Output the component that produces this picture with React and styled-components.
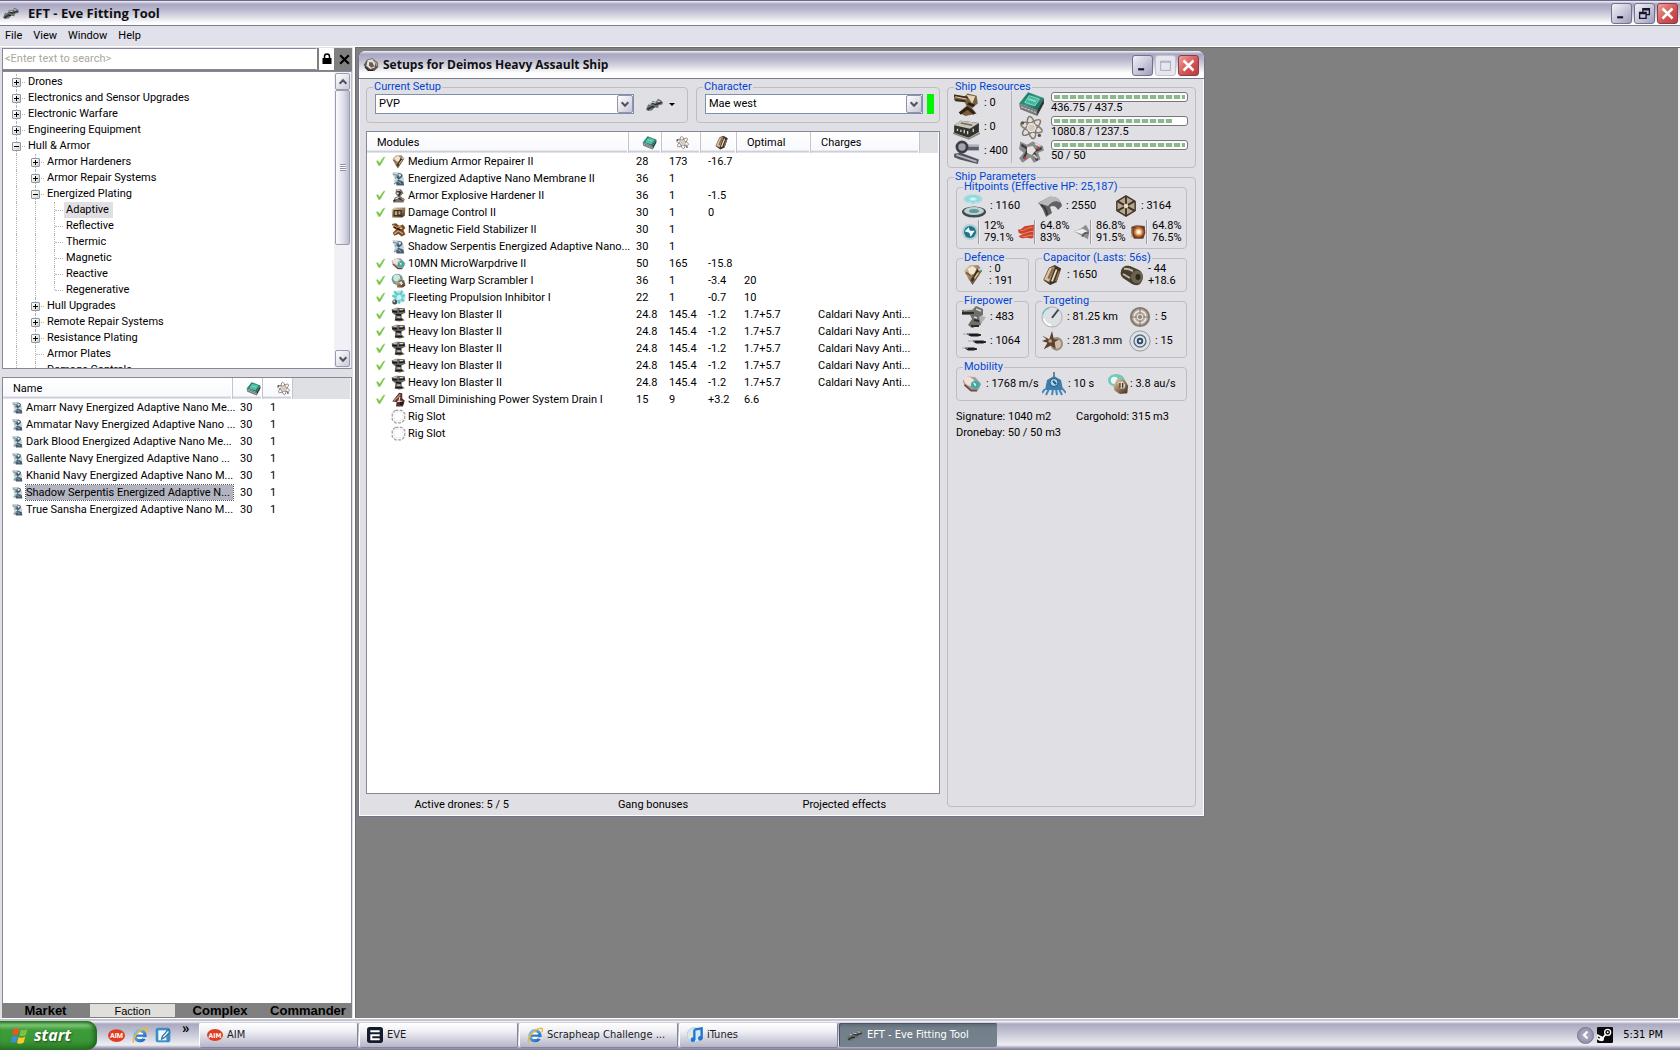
import React from 'react';
import styled, { createGlobalStyle, css } from 'styled-components';

const GlobalStyle = createGlobalStyle`
  *, *::before, *::after {
    box-sizing: border-box;
  }

  body {
    margin: 0;
    background: #808080;
  }

  body, button, input, select {
    font-family: Roboto, 'Liberation Sans', sans-serif;
    font-size: 11px;
    line-height: 12px;
    color: #000;
  }

  button {
    padding: 0;
    border: 0;
    background: none;
  }

  svg {
    display: block;
    flex: none;
  }

  h1, h2, ul {
    margin: 0;
    padding: 0;
    list-style: none;
  }
`;

/* ---------- icons ---------- */

const IconDefs = () => (
  <svg width="0" height="0" style={{ position: 'absolute' }} aria-hidden="true">
    <defs>
      <linearGradient id="steel" x1="0" y1="0" x2="1" y2="1">
        <stop offset="0" stopColor="#e4e4e6" />
        <stop offset="0.5" stopColor="#7d7d82" />
        <stop offset="1" stopColor="#2d2d32" />
      </linearGradient>
      <linearGradient id="brass" x1="0" y1="0" x2="1" y2="1">
        <stop offset="0" stopColor="#efe0c4" />
        <stop offset="0.5" stopColor="#957a58" />
        <stop offset="1" stopColor="#35271b" />
      </linearGradient>
      <linearGradient id="teal" x1="0" y1="0" x2="1" y2="1">
        <stop offset="0" stopColor="#12685f" />
        <stop offset="0.5" stopColor="#2f9a84" />
        <stop offset="1" stopColor="#14564f" />
      </linearGradient>
      <radialGradient id="cyan">
        <stop offset="0" stopColor="#f2ffff" />
        <stop offset="0.5" stopColor="#7fdcdf" />
        <stop offset="1" stopColor="#7fc9d0" stopOpacity="0.2" />
      </radialGradient>
      <linearGradient id="blue" x1="0" y1="0" x2="1" y2="1">
        <stop offset="0" stopColor="#8cc4ee" />
        <stop offset="1" stopColor="#1a64b5" />
      </linearGradient>
    </defs>
  </svg>
);

const glyphs = {
  gun: (
    <>
      <path d="M0 19l3-7 5-2 1-3 5 1 3-4 4 2 3 3-1 3-5 1-1 4-5-1-3 4-6 1z" fill="#6a7173" />
      <path d="M2 19l7-4 3 1M9 10l5 2 8-3" stroke="#26292a" strokeWidth="2" fill="none" />
      <path d="M9 9l5 1M16 7l4 1M4 12l3-1" stroke="#c9d1cd" strokeWidth="1.5" />
    </>
  ),
  ship: (
    <>
      <path d="M1 12l5-8 8-2 8 6 1 7-6 6-9 0z" fill="#5f5651" />
      <path d="M7 5l7-2 5 5-2 8-6 2-6-5z" fill="#e9e0d8" />
      <path d="M9 8l5 0 3 6-4 2-4-3z" fill="#6b5c53" />
      <path d="M15 5l5 4 1 5" stroke="#a39a93" strokeWidth="2" fill="none" />
      <path d="M3 15l5 5 7 0" stroke="#2a2523" strokeWidth="2" fill="none" />
    </>
  ),
  cpu: (
    <>
      <path d="M9 2l14 5-6 11L1 12z" fill="url(#teal)" />
      <path d="M10 5l9 3-4 6-9-3z" fill="#43b89d" stroke="#a5e6d4" strokeWidth="0.7" />
      <path d="M9 8l7 2" stroke="#8ee0cb" strokeWidth="1.5" />
      <path d="M1 12l16 6v5L2 17z" fill="#77797a" />
      <path d="M17 18l6-11v5l-6 11z" fill="#2b3634" />
      <path d="M3 15l13 5" stroke="#c9cdc9" strokeWidth="1" strokeDasharray="2 1" />
    </>
  ),
  grid: (
    <>
      <g fill="none" stroke="#857a70" strokeWidth="1.3">
        <ellipse cx="12" cy="12" rx="10" ry="3.500" transform="rotate(20 12 12)" />
        <ellipse cx="12" cy="12" rx="10" ry="3.500" transform="rotate(80 12 12)" />
        <ellipse cx="12" cy="12" rx="10" ry="3.500" transform="rotate(140 12 12)" />
      </g>
      <circle cx="12" cy="12" r="3.500" fill="#d3c8bb" stroke="#f5efe4" />
      <circle cx="4" cy="8" r="1.500" fill="#5d5148" />
      <circle cx="19" cy="19" r="1.500" fill="#5d5148" />
    </>
  ),
  cap: (
    <>
      <path d="M3 18L9 4l6-3 7 4-5 15-7 3z" fill="#3f3223" />
      <path d="M3 17L9 4l6-1-6 17z" fill="#d9c6a8" stroke="#7a6349" />
      <path d="M8 16l5-11" stroke="#8a6d4c" strokeWidth="2.5" />
      <path d="M12 19l5-13" stroke="#e8dac4" strokeWidth="2" />
      <path d="M16 19l4-11" stroke="#886d50" strokeWidth="2" />
    </>
  ),
  repairer: (
    <>
      <path d="M2 8l6-6 9 0 4 6-4 6-6 9-4-6z" fill="url(#brass)" />
      <path d="M6 6l5-3 4 3-2 5-5 2z" fill="#f2e6d3" />
      <path d="M10 19l7-12" stroke="#3e2d1e" strokeWidth="2.5" />
      <path d="M4 10l5 3" stroke="#8a5a2f" strokeWidth="2" />
      <path d="M13 16l4-6" stroke="#dcc6a4" strokeWidth="1.5" />
      <path d="M17 7l5-1" stroke="#b9e4e8" strokeWidth="2" />
    </>
  ),
  membrane: (
    <>
      <path d="M2 2h10l6 3 3 8-2 8H4l2-7z" fill="#c3d4d9" />
      <path d="M12 3c7 0 8 5 4 8l-4 3 8 3 1 6H9c-2-4 0-7 3-9L8 9z" fill="#465d70" />
      <path d="M3 5l7 2-3 5M5 21l6-5" stroke="#7d9ba8" strokeWidth="2" fill="none" />
      <path d="M12 5l4 1-2 3zM12 17l4 3" stroke="#e6f2f5" fill="#e6f2f5" />
    </>
  ),
  hardener: (
    <>
      <path d="M8 2h8l4 6-5 5 7 5-2 5H3l3-8 5-2-4-4z" fill="#78706a" />
      <path d="M10 4l5 3-3 6M4 21l7-5 8 4" stroke="#2d2520" strokeWidth="2" fill="none" />
      <path d="M9 3l5 1M7 18l5-3M9 8l3 1" stroke="#eee6dc" strokeWidth="2" />
      <circle cx="19" cy="18" r="2" fill="#b78355" />
    </>
  ),
  damage: (
    <>
      <path d="M1 7l4-3h18l-1 13-4 3H2z" fill="url(#brass)" />
      <path d="M4 8h13v10H4z" fill="#3b2d20" />
      <path d="M6 10h4v6H6zM12 10h3v5h-3z" fill="#c5a67d" />
    </>
  ),
  magstab: (
    <>
      <path d="M1 3l7-1 5 4 6-2 4 5-3 4 3 7-6 3-5-4-7 3-2-5 5-5z" fill="#75492a" />
      <path d="M3 5l6 4 8-3M5 19l7-5 7 5" stroke="#d99f61" strokeWidth="2" fill="none" />
      <path d="M9 10l6 3M4 8l4 2" stroke="#2c1a0e" strokeWidth="2.5" />
      <path d="M14 10l4 0" stroke="#f0d9b8" strokeWidth="2" />
    </>
  ),
  mwd: (
    <>
      <path d="M1 8l6-5 9 1 7 8-4 8-9 0-7-6z" fill="#a59c98" />
      <ellipse cx="9" cy="9" rx="7" ry="5" fill="#f1e2d9" transform="rotate(30 9 9)" />
      <ellipse cx="16" cy="13" rx="5.500" ry="5" fill="#47aaa2" />
      <path d="M13 10l4 2-1 3z" fill="#dcfffa" />
      <path d="M3 13l8 7 7 0" stroke="#74453a" strokeWidth="2" fill="none" />
    </>
  ),
  scrambler: (
    <>
      <circle cx="10" cy="10" r="9" fill="#6f9f98" />
      <circle cx="9" cy="8" r="5.500" fill="#c8e9e2" />
      <path d="M8 15l5-6 8 2 2 9-4 3H10z" fill="url(#brass)" />
      <path d="M12 14l5-2 3 5-3 3" stroke="#4b3c2d" strokeWidth="1.500" fill="#e9dfd0" />
    </>
  ),
  inhibitor: (
    <>
      <circle cx="13" cy="11" r="11" fill="url(#cyan)" />
      <path d="M5 2l7 7M2 9l9 3M18 1l-4 8M22 8l-8 4M21 18l-7-5M13 22l0-8" stroke="#5fc5cc" strokeWidth="3" />
      <circle cx="13" cy="12" r="4" fill="#c5f3f2" />
      <circle cx="6" cy="19" r="4" fill="#4c5253" />
      <circle cx="5" cy="18" r="1.500" fill="#d9dede" />
    </>
  ),
  blaster: (
    <>
      <path d="M1 4l8-3 13 1 1 7-6 3 0 5 5 4-8 2-8-1 1-9-5-4z" fill="#68635e" />
      <path d="M2 7l8 1M13 7l9-1M8 12l8 1M7 20l11 0" stroke="#1a1918" strokeWidth="2.5" />
      <path d="M4 4l6-1M14 4h5M10 16h5" stroke="#ddd6cc" strokeWidth="2" />
    </>
  ),
  nos: (
    <>
      <path d="M2 15L13 1l5 1v8l4 4-3 9H8l1-7z" fill="#54312c" />
      <path d="M5 14l10-10" stroke="#cf8d78" strokeWidth="2" />
      <path d="M10 15l8 0M14 8l-1 6" stroke="#eadbd1" strokeWidth="2" />
      <circle cx="17" cy="18" r="3" fill="#1f1817" />
    </>
  ),
  rig: (
    <>
      <path d="M7 2h10l5 5v10l-5 5H7l-5-5V7z" fill="#fff" stroke="#a2a2a2" strokeWidth="2" strokeDasharray="5 2" />
      <path d="M8 5h8l3 3v8l-3 3H8l-3-3V8z" fill="none" stroke="#d2d2d2" strokeDasharray="4 2" />
    </>
  ),
  turret: (
    <>
      <path d="M1 4l9 2 3-3 8 2 1 7-5 4 4 5-10 2-6-3 7-6-2-4-9-1z" fill="#77603f" />
      <path d="M1 5l12 2M2 9l9 1" stroke="#3c2c1c" strokeWidth="2" />
      <path d="M2 6l10 2M13 5l6 1-2 5z" stroke="#e6d3b6" fill="#e6d3b6" />
      <path d="M6 21l7-5 6 5M13 12l6 2" stroke="#2c2117" strokeWidth="2.5" fill="none" />
    </>
  ),
  launcher: (
    <>
      <path d="M1 10l6-4 16 2v8l-9 5-13-4z" fill="#33332f" />
      <path d="M1 10l6-4 16 2-8 5z" fill="#c9c6ba" />
      <path d="M7 8l10 2" stroke="#6d6a5f" strokeWidth="1.500" />
      <path d="M4 13v2M7 14v2M10 14v3M13 15v3M18 13v3" stroke="#d6d3c7" strokeWidth="1.200" />
      <path d="M0 17l14 5 10-5" stroke="#8e8b80" strokeWidth="1.500" fill="none" />
    </>
  ),
  calibration: (
    <>
      <path d="M11 6h12v5H11z" fill="#5d5f68" />
      <path d="M11 7h12" stroke="#b9bbc4" strokeWidth="1.500" />
      <circle cx="8" cy="8" r="4.500" fill="#a3a5ae" stroke="#3c3e46" strokeWidth="2.500" />
      <path d="M1 14l6-1 16 6-1 4-16-4-5-2z" fill="#53555e" />
      <path d="M3 15l18 6" stroke="#b4b6bf" strokeWidth="1.500" />
    </>
  ),
  drone: (
    <>
      <path d="M2 3l6 3 5-3 9 4 1 4-5 2 2 6-6 3-3-5-7 5-3-4 4-5-4-3z" fill="#8a898c" />
      <path d="M3 6l6 4-4 8M21 9l-7 3 3 8" stroke="#3c3b40" strokeWidth="2" fill="none" />
      <path d="M8 8l5-1 3 4-4 4-4-2z" fill="#e4e1de" />
      <path d="M15 5l5 2M14 15l3 3" stroke="#d9d7d7" strokeWidth="1.500" />
      <circle cx="6" cy="18" r="1.200" fill="#c23b32" />
      <circle cx="18" cy="9" r="1.200" fill="#c23b32" />
    </>
  ),
  shield: (
    <>
      <ellipse cx="11" cy="5" rx="10" ry="5" fill="url(#cyan)" />
      <path d="M8 7v9M14 7v9" stroke="#c5f1f2" strokeWidth="3" opacity="0.400" />
      <ellipse cx="12" cy="18" rx="12" ry="5.500" fill="#3d4c4f" />
      <ellipse cx="12" cy="17" rx="10" ry="4" fill="#c3d1d3" />
      <ellipse cx="12" cy="17" rx="5" ry="2" fill="#5b9ca0" />
    </>
  ),
  armor: (
    <>
      <path d="M0 9L11 3c8-1 12 3 13 9l-4 4c-2-4-5-5-8-3l2 6-6 4C6 18 4 12 0 9z" fill="#626264" />
      <path d="M0 9L11 3c7-1 11 2 12 6-5-3-9-2-13 3z" fill="#b9b9bb" />
      <path d="M3 11c4 2 6 6 6 10" stroke="#3a3a3c" strokeWidth="2" fill="none" />
    </>
  ),
  hull: (
    <>
      <path d="M12 1l10 6v10l-10 6-10-6V7z" fill="#b5a78f" stroke="#3d3225" strokeWidth="1.500" />
      <path d="M12 2v20M3 7l18 10M21 7L3 17" stroke="#3d3225" strokeWidth="2" />
      <circle cx="12" cy="12" r="2.500" fill="#e8dcc6" />
    </>
  ),
  em: (
    <>
      <circle cx="12" cy="12" r="12" fill="#8fc6d0" opacity="0.600" />
      <circle cx="12" cy="12" r="9" fill="#25718a" />
      <path d="M4 11l6-6 2 5 7 0-6 9-2-6z" fill="#eaffff" />
    </>
  ),
  thermal: (
    <>
      <path d="M0 8c6 2 6-4 12-5l12-2-1 20c-5 2-9-1-13 0s-7 0-9-3l6-2-6-3z" fill="#c94330" />
      <path d="M4 10c7 0 9-5 18-5M4 15c8 0 10-4 19-4M7 19c7 0 9-3 15-2" stroke="#ef8a6c" strokeWidth="1.500" fill="none" />
    </>
  ),
  kinetic: (
    <>
      <path d="M0 11l10-4 8-6 5 9-2 13-9-5z" fill="#8e8e91" />
      <path d="M0 11l13-4 7 4-9 4z" fill="#ececee" />
      <path d="M12 19l5-6 5 1" stroke="#4f4f52" strokeWidth="2" fill="none" />
    </>
  ),
  explosive: (
    <>
      <path d="M2 4l8-2 12 1 1 10-3 9-14 0-4-9z" fill="#6b3f29" />
      <circle cx="13" cy="12" r="7.500" fill="#c07038" />
      <circle cx="13" cy="12" r="5" fill="#eeb676" />
      <circle cx="13" cy="12" r="3" fill="#fff6dc" />
      <path d="M3 6v14M6 3h8" stroke="#a9805f" strokeWidth="1.500" />
    </>
  ),
  recharge: (
    <>
      <path d="M1 8c1-5 5-6 9-5l9 4c5 3 5 10 1 14-3 2-6 1-8 0L3 15c-2-2-3-4-2-7z" fill="#453f33" />
      <ellipse cx="17" cy="14" rx="6" ry="6.500" fill="#6c634f" />
      <ellipse cx="18" cy="14" rx="2.500" ry="3" fill="#2c281f" />
      <path d="M4 6c3-1 5 0 9 2M3 11l7 4" stroke="#c4b99f" strokeWidth="2" fill="none" />
    </>
  ),
  firepower: (
    <>
      <path d="M15 10l9 2-5 7-5 0z" fill="#9c9ca0" opacity="0.700" />
      <path d="M0 5l11-1 3-3 7 3v6l-4 2 2 8-9 3-4-3 4-6-2-4-8 0z" fill="#6c7069" />
      <path d="M0 8l12 0M12 15l5 1M9 21l8 0" stroke="#2b2e28" strokeWidth="2" />
      <path d="M2 5l9-1M14 4l5 2M12 12l3 1" stroke="#d3d7cf" strokeWidth="1.500" />
    </>
  ),
  volley: (
    <>
      <path d="M5 5h11l3 1-3 1h-7zM11 12h10l3 1-3 1h-7zM3 19h9l3 1-3 1H6z" fill="#1c1c1e" stroke="#1c1c1e" />
      <path d="M1 5h6M6 12h7M0 19h6" stroke="#a9a9ae" strokeWidth="1" />
    </>
  ),
  range: (
    <>
      <circle cx="12" cy="12" r="11" fill="#dce0e3" stroke="#a9adb1" />
      <path d="M2 9a10 10 0 0 1 7-7" stroke="#5fc0d0" strokeWidth="1.500" fill="none" />
      <path d="M12 13l7-9" stroke="#3c4a52" strokeWidth="2" />
      <path d="M3 14a10 10 0 0 0 8 7" stroke="#fff" strokeWidth="2" fill="none" />
    </>
  ),
  targets: (
    <>
      <circle cx="12" cy="12" r="10" fill="#b3a8a0" stroke="#85786f" strokeWidth="2" />
      <circle cx="12" cy="12" r="6.500" fill="none" stroke="#f1ebe4" strokeWidth="1.500" />
      <path d="M12 2v20M2 12h20" stroke="#857970" strokeWidth="1.200" />
      <circle cx="12" cy="12" r="3" fill="none" stroke="#f1ebe4" />
    </>
  ),
  scan: (
    <>
      <ellipse cx="17" cy="15" rx="6" ry="6.500" fill="#cdbfae" stroke="#9c8a75" strokeWidth="2" />
      <path d="M1 6l8 4 3-9 2 9 6 0-5 3 1 8-5-4-8 4 4-7-6-2 5-2z" fill="#5b432d" />
      <circle cx="10" cy="12" r="2" fill="#c9a57a" />
    </>
  ),
  sensor: (
    <g fill="none">
      <circle cx="12" cy="12" r="11" fill="#dfe2e6" stroke="#8d949c" />
      <circle cx="12" cy="12" r="6.500" stroke="#5e6f80" strokeWidth="1.500" />
      <circle cx="12" cy="12" r="2.500" stroke="#24496b" strokeWidth="2" />
    </g>
  ),
  align: (
    <>
      <path d="M12 0v6" stroke="#52616e" strokeWidth="1.500" />
      <path d="M5 8l7-4 7 4 2 10H3z" fill="#3f7ca9" />
      <circle cx="12" cy="10.500" r="4" fill="#a9d8f0" stroke="#245679" />
      <path d="M11 9l3 3" stroke="#245679" strokeWidth="2" />
      <path d="M3 17l-3 4M7 17l-3 6M11 17l-1 6M14 17l1 6M17 17l3 6M20 16l4 5" stroke="#4288b6" strokeWidth="2" />
    </>
  ),
  warp: (
    <>
      <ellipse cx="9" cy="8" rx="9" ry="7" fill="#5abfb3" opacity="0.800" />
      <ellipse cx="7" cy="8" rx="4" ry="4" fill="#e8faf6" />
      <path d="M6 14l4-8 8 1 4 7-1 8-8 1-6-4z" fill="url(#brass)" />
      <path d="M11 10l5-1 3 4-1 4-5 0z" fill="#ddd3c6" />
      <path d="M13 11v5M16 11v5" stroke="#453a2e" strokeWidth="1.500" />
    </>
  ),
  check: <path d="M3 11l3-1 4 5L18 3l4-1L11 21H8z" fill="#74c341" stroke="#9bdb74" strokeWidth="1" />,
  windows: (
    <>
      <path d="M3 5c3-3 6-2 8-1l-2 8c-3-1-5-1-8 1z" fill="#e8562a" />
      <path d="M13 5c3 1 6 1 9-1l-2 8c-3 2-6 2-9 1z" fill="#7dc242" />
      <path d="M1 15c3-2 5-2 8-1l-2 8c-3-1-5-1-7 1z" fill="#3b8fe0" />
      <path d="M10 15c3 1 6 1 9-1l-2 8c-3 2-6 2-9 1z" fill="#fbc928" />
    </>
  ),
  aim: (
    <>
      <ellipse cx="12" cy="12" rx="12" ry="9" fill="#e23b1d" />
      <text x="12" y="16" textAnchor="middle" fontSize="10" fontWeight="700" fill="#fff">
        AIM
      </text>
    </>
  ),
  ie: (
    <>
      <circle cx="12" cy="13" r="7.500" stroke="url(#blue)" strokeWidth="5" fill="#fff" />
      <path d="M6 13h15" stroke="#2f7cc8" strokeWidth="3.500" />
      <path d="M15 15.500h9l-1 3-6-1z" fill="#e4e4ee" />
      <path d="M3 23c-5-4 8-21 19-21 3 1 1 4 0 5" stroke="#f0b92c" strokeWidth="2.200" fill="none" />
    </>
  ),
  desktop: (
    <>
      <rect x="1" y="1" width="22" height="22" rx="4" fill="#3a8fc4" />
      <path d="M5 5h12v15H5z" fill="#eef7fc" />
      <path d="M20 4l-9 10-1 4 4-2 8-8z" fill="#fff" stroke="#2d78ab" strokeWidth="2" />
    </>
  ),
  eve: (
    <>
      <rect x="0" y="0" width="24" height="24" rx="4" fill="#131c2c" />
      <path d="M5 5h14v3H5zM5 11h14v3H5zM5 17h14v3H5zM5 11h3v8H5z" fill="#fff" />
    </>
  ),
  itunes: (
    <>
      <circle cx="11" cy="12" r="11" fill="#d5e8f6" stroke="#9dc0dc" />
      <circle cx="6" cy="12" r="3" fill="#f3e6b8" />
      <path d="M11 4l11-2v15M11 4v15" stroke="#2177cf" strokeWidth="3.500" fill="none" />
      <circle cx="9" cy="19" r="3.500" fill="#2177cf" />
      <circle cx="20" cy="17" r="3.500" fill="#2177cf" />
    </>
  ),
  steam: (
    <>
      <rect width="24" height="24" rx="2" fill="#0a0a0a" />
      <circle cx="16" cy="8" r="4.500" fill="none" stroke="#fff" strokeWidth="2" />
      <circle cx="16" cy="8" r="1.500" fill="#fff" />
      <path d="M13 11l-4 5L0 12v5l5 3" stroke="#fff" strokeWidth="2.500" fill="none" />
      <circle cx="7" cy="18" r="3.500" fill="#fff" />
    </>
  ),
  lock: (
    <>
      <path d="M7 11V7a5 5 0 0 1 10 0v4" stroke="#000" strokeWidth="3" fill="none" />
      <rect x="3" y="10" width="18" height="12" fill="#000" />
    </>
  ),
  cross: <path d="M4 4l16 16M20 4L4 20" stroke="currentColor" strokeWidth="4" fill="none" />,
  minimize: <path d="M4 17h11v4H4z" fill="currentColor" />,
  restore: (
    <path d="M3 10h12v11H3zM3 12h12M9 9V3h12v11h-5M9 5h12" stroke="currentColor" strokeWidth="2.500" fill="none" />
  ),
  maximize: <path d="M3 4h18v17H3zM3 6h18" stroke="currentColor" strokeWidth="1.500" fill="none" />,
  down: <path d="M4 8l8 8 8-8" stroke="#4d5360" strokeWidth="5" fill="none" />,
  up: <path d="M4 16l8-8 8 8" stroke="#4d5360" strokeWidth="5" fill="none" />,
  left: <path d="M15 5l-7 7 7 7" stroke="#fff" strokeWidth="4" fill="none" />,
};

const Icon = ({ name, size = 15 }) => (
  <svg width={size} height={size} viewBox="0 0 24 24" aria-hidden="true">
    {glyphs[name]}
  </svg>
);

/* ---------- application frame ---------- */

const StyledPage = styled.div`
  height: 100vh;
  min-height: 860px;
  display: flex;
  flex-direction: column;
  background: #e0dfe3;
`;

const titleGradient = css`
  background: linear-gradient(#f4f4fa 0, #a8a6c2 3px, #b6b5cb 8px, #dcdce4 16px, #fdfdfe 22px, #fff 100%);
`;

const StyledTitleBar = styled.header`
  ${titleGradient}
  height: 26px;
  flex: none;
  display: flex;
  align-items: center;
  gap: 9px;
  padding: 0 2px 0 3px;
  border-top: 1px solid #6b6888;
  border-bottom: 1px solid #7b7c8d;
`;

const StyledTitle = styled.h1`
  flex: 1;
  font: 700 13px/16px 'Open Sans', sans-serif;
  color: #101014;
`;

const StyledCaptionButtons = styled.div`
  display: flex;
  gap: 2px;
`;

const StyledCaptionButton = styled.button`
  width: 21px;
  height: 21px;
  display: flex;
  align-items: center;
  justify-content: center;
  border: 1px solid #74738f;
  border-radius: 3px;
  color: #16162a;
  background: linear-gradient(135deg, #f3f3fa, #b9b9cf 70%, #9c9cb8);

  ${({ $kind }) =>
    $kind === 'close' &&
    css`
      color: #fff;
      border-color: #8c3b48;
      background: linear-gradient(135deg, #eba29c, #d2504f 60%, #b93c44);
    `}

  ${({ $kind }) =>
    $kind === 'maximize' &&
    css`
      color: #9fa0b0;
      border-color: #c3c3d2;
      background: #e6e6ee;
    `}
`;

const StyledMenu = styled.nav`
  height: 21px;
  flex: none;
  display: flex;
  align-items: center;
  gap: 11px;
  padding: 0 5px 1px;
  background: #e0e1ea;
  border-bottom: 1px solid #fff;
`;

const StyledMain = styled.main`
  flex: 1;
  min-height: 0;
  display: flex;
`;

/* ---------- left panel ---------- */

const StyledSidebar = styled.aside`
  width: 355px;
  flex: none;
  display: flex;
  flex-direction: column;
  padding: 1px 1px 0 2px;
  border-right: 2px solid #fff;
`;

const StyledSearch = styled.div`
  display: flex;
  height: 23px;
  padding-bottom: 1px;
  background: #808080;

  & input {
    flex: 1;
    min-width: 0;
    border: 1px solid #85879a;
    border-right-color: #fff;
    padding: 0 2px 1px;
    outline: 0;
  }

  & input::placeholder {
    color: #aca899;
    opacity: 1;
  }
`;

const StyledSearchButton = styled.button`
  width: ${({ $white }) => ($white ? 17 : 18)}px;
  border-left: 2px solid #808080;
  background: ${({ $white }) => ($white ? '#fff' : '#808080')};
  display: flex;
  align-items: center;
  justify-content: center;
`;

const StyledTreeBox = styled.div`
  height: 298px;
  flex: none;
  display: flex;
  overflow: hidden;
  background: #fff;
  border: 1px solid #85879a;
  border-right-color: #b9bac8;
`;

const StyledTree = styled.ul`
  flex: 1;
  padding: 2px 0 0 4px;
`;

const StyledTreeItem = styled.li`
  height: 16px;
  display: flex;
  align-items: center;
`;

const StyledGuide = styled.span`
  position: relative;
  width: 19px;
  height: 16px;
  flex: none;

  &::before {
    content: '';
    position: absolute;
    left: 9px;
    top: 0;
    height: ${({ $end }) => ($end ? 8 : 16)}px;
    border-left: 1px dotted #b5b5b5;
  }

  &::after {
    content: '';
    position: absolute;
    left: 10px;
    right: 1px;
    top: 8px;
    border-top: ${({ $branch }) => ($branch ? '1px dotted #b5b5b5' : '0')};
  }
`;

const StyledToggle = styled.button`
  position: absolute;
  z-index: 1;
  left: 5px;
  top: 4px;
  width: 9px;
  height: 9px;
  border: 1px solid #8f98a5;
  border-radius: 1px;
  background: linear-gradient(#000, #000) center / 5px 1px no-repeat,
    ${({ $open }) => !$open && 'linear-gradient(#000, #000) center / 1px 5px no-repeat,'}
    linear-gradient(135deg, #fff, #d5d2cb);
`;

const StyledTreeLabel = styled.span`
  padding: 2px 4px 2px 2px;
  background: ${({ $selected }) => ($selected ? '#e0dfe3' : 'transparent')};
`;

const StyledScrollbar = styled.div`
  width: 17px;
  display: flex;
  flex-direction: column;
  align-items: stretch;
  padding: 1px;
  background: #f1f1f5;
`;

const StyledScrollButton = styled.button`
  height: 17px;
  display: flex;
  align-items: center;
  justify-content: center;
  border: 1px solid #9a9bb0;
  border-radius: 2px;
  background: linear-gradient(135deg, #fff, #c9cad9);
`;

const StyledScrollThumb = styled.div`
  height: 155px;
  margin-bottom: auto;
  display: flex;
  align-items: center;
  justify-content: center;
  border: 1px solid #9a9bb0;
  border-radius: 2px;
  background: linear-gradient(90deg, #fbfbfe, #dcdce8 60%, #b9bacf);

  &::before {
    content: '';
    width: 6px;
    height: 7px;
    background: repeating-linear-gradient(#8f90a8 0 1px, #fff 1px 2px);
  }
`;

const StyledListBox = styled.div`
  flex: 1;
  min-height: 0;
  overflow: hidden;
  background: #fff;
  border: 1px solid #85879a;
  border-bottom-width: ${({ $open }) => ($open ? 0 : 1)}px;
  margin-top: 8px;
`;

const StyledTable = styled.table`
  width: 100%;
  table-layout: fixed;
  border-collapse: separate;
  border-spacing: 0;

  & th {
    height: 21px;
    padding: 0 0 0 10px;
    text-align: left;
    font-weight: 400;
    background: linear-gradient(#fff, #f8f9fd 18px, #d8d8e2 19px, #c5c5d0 20px, #fff 21px);
    background-repeat: no-repeat;
    box-shadow: inset -1px 0 #fff;
    border-right: 1px solid #c3c4d0;
  }

  & th:has(svg) {
    padding-left: 13px;
  }

  & th:last-child {
    border-right: 0;
    background: #dfe0e4;
  }

  & td {
    height: 17px;
    padding: 0 0 0 7px;
    white-space: nowrap;
  }

  & td:first-child {
    padding-left: 8px;
  }
`;

const StyledNameCell = styled.div`
  display: flex;
  align-items: center;
  height: 17px;
  gap: 2px;
`;

const StyledCheckSlot = styled.span`
  width: 14px;
  flex: none;
`;

const StyledItemName = styled.span`
  line-height: 15px;

  ${({ $selected }) =>
    $selected &&
    css`
      flex: 1;
      background: #b2b4bf;
      outline: 1px dotted #55555f;
    `}
`;

const StyledTabs = styled.div`
  height: 15px;
  flex: none;
  display: grid;
  grid-template-columns: 87px 87px 1fr 88px;
  background: #808080;
`;

const StyledTab = styled.button`
  font-family: 'Liberation Sans', Arial, sans-serif;
  font-size: ${({ $active }) => ($active ? 11 : 13)}px;
  font-weight: ${({ $active }) => ($active ? 400 : 700)};
  margin: ${({ $active }) => ($active ? '1px' : '0')};
  background: ${({ $active }) => ($active ? '#e0dfdc' : 'transparent')};
`;

/* ---------- fitting window ---------- */

const StyledDesktop = styled.section`
  flex: 1;
  min-width: 0;
  padding: 3px 3px 3px 2px;
  background: #808080;
  border: solid #6a6a6a;
  border-width: 1px 0 0 1px;
  box-shadow: inset -2px 0 #f0f0f4;
`;

const StyledWindow = styled.article`
  width: 64%;
  min-width: 847px;
  height: calc(80% - 5px);
  display: flex;
  flex-direction: column;
  background: #e0dfe3;
  border: 1px solid #74738f;
  border-top: 0;
  border-radius: 7px 7px 0 0;
  box-shadow: inset 1px 0 #fff, inset -1px -1px #fff;
`;

const StyledWindowTitle = styled.header`
  ${titleGradient}
  height: 28px;
  flex: none;
  display: flex;
  align-items: center;
  gap: 4px;
  padding: 1px 5px 0 4px;
  border-bottom: 1px solid #7b7c8d;
  border-radius: 7px 7px 0 0;

  & ${StyledTitle} {
    font-size: 12px;
  }
`;

const StyledWindowBody = styled.div`
  flex: 1;
  min-height: 0;
  display: flex;
  gap: 7px;
  padding: 2px 8px 0 7px;
`;

const StyledLeftColumn = styled.div`
  flex: 1;
  min-width: 0;
  display: flex;
  flex-direction: column;
`;

const StyledRightColumn = styled.div`
  width: 249px;
  flex: none;
  display: flex;
  flex-direction: column;
  gap: 3px;
  padding-bottom: 9px;
`;

const StyledGroup = styled.fieldset`
  min-width: 0;
  margin: 0;
  padding: 0 ${({ $pad = 5 }) => $pad}px 4px;
  border: 1px solid #bfbdc4;
  border-radius: 4px;
  flex: ${({ $grow }) => ($grow ? 1 : 'none')};

  & > legend {
    margin: 0 0 -2px ${({ $pad = 5 }) => 6 - $pad}px;
    padding: 0 1px;
    height: 12px;
    color: #0046d5;
  }
`;

const StyledSetupRow = styled.div`
  display: grid;
  grid-template-columns: 322px 1fr;
  gap: 8px;
`;

const StyledSetupControls = styled.div`
  display: flex;
  align-items: center;
  gap: 4px;
  padding: 3px 0 4px 3px;
`;

const StyledCombo = styled.div`
  position: relative;
  flex: 1;

  & select {
    width: 100%;
    height: 20px;
    padding: 0 3px;
    appearance: none;
    border: 1px solid #7f8fae;
    border-radius: 0;
    background: #fff;
  }

  & span {
    position: absolute;
    top: 1px;
    right: 1px;
    width: 16px;
    height: 18px;
    display: flex;
    align-items: center;
    justify-content: center;
    pointer-events: none;
    border: 1px solid #9092ab;
    border-radius: 2px;
    background: linear-gradient(135deg, #fff, #c6c7d6);
  }
`;

const StyledSetupButton = styled.button`
  width: 44px;
  height: 20px;
  display: flex;
  align-items: center;
  justify-content: center;
  gap: 6px;

  &::after {
    content: '';
    border: solid transparent;
    border-width: 3px 3px 0;
    border-top-color: #000;
  }
`;

const StyledSkillBar = styled.div`
  width: 7px;
  height: 20px;
  background: #00f500;
`;

const StyledStatus = styled.footer`
  height: 22px;
  flex: none;
  display: grid;
  grid-template-columns: repeat(3, 1fr);
  align-items: center;
  text-align: center;
`;

const StyledResources = styled.div`
  display: grid;
  grid-template-columns: 59px 1fr;
  gap: 6px;
`;

const StyledStack = styled.div`
  border-right: ${({ $ruled }) => ($ruled ? '1px solid #b6b4ba' : '0')};
`;

const StyledStat = styled.div`
  height: ${({ $height = 24 }) => $height}px;
  display: flex;
  align-items: center;
  gap: ${({ $gap = 4 }) => $gap}px;
  white-space: nowrap;
`;

const StyledMeter = styled.div`
  flex: 1;
  padding-right: 2px;
`;

const StyledMeterTrack = styled.div`
  height: 10px;
  padding: 2px;
  border: 1px solid #77777c;
  border-radius: 3px;
  background: #fff;

  & div {
    height: 4px;
    background: repeating-linear-gradient(90deg, #8fb78f 0 6px, #e8f2e8 6px 8px);
  }
`;

const StyledGroupPair = styled.div`
  display: grid;
  grid-template-columns: 73px 1fr;
  gap: 6px;
`;

const StyledParams = styled.div`
  display: flex;
  flex-direction: column;
  gap: 3px;
`;

const StyledStatGrid = styled.div`
  display: grid;
  grid-template-columns: ${({ $columns }) => $columns};
`;

const StyledResist = styled.div`
  display: flex;
  align-items: center;

  & p {
    margin: 0;
    padding-left: 4px;
    border-left: 2px groove #f0f0f4;
  }
`;

const StyledLines = styled.p`
  margin: 0;
  padding-top: 1px;
`;

const StyledInfo = styled.div`
  display: grid;
  grid-template-columns: 120px 1fr;
  padding-top: 5px;
  line-height: 16px;
`;

/* ---------- taskbar ---------- */

const StyledTaskbar = styled.footer`
  height: 32px;
  flex: none;
  display: flex;
  background: linear-gradient(#fff 0 1px, #8c8ca8 2px, #fff 3px, #aaa9c0 6px, #c2c1d2 14px, #eeeef4 27px, #85849e 31px);
  font-family: 'DejaVu Sans Condensed', 'DejaVu Sans', sans-serif;
`;

const StyledStart = styled.button`
  width: 97px;
  margin-top: 3px;
  display: flex;
  align-items: center;
  gap: 5px;
  padding: 0 0 2px 11px;
  color: #fff;
  font: italic 700 16px/20px 'Open Sans', sans-serif;
  text-shadow: 1px 1px 2px #1c4a17;
  border-radius: 0 10px 10px 0;
  background: linear-gradient(#2f7f2c, #7cc674 4px, #3f9c3a 9px, #3a9735 20px, #2a7426);
  box-shadow: inset -3px 0 4px #1f661c;
`;

const StyledQuickLaunch = styled.div`
  width: 102px;
  display: flex;
  align-items: center;
  gap: 7px;
  padding: 2px 0 0 11px;

  & button:last-child {
    align-self: flex-start;
    padding-top: 2px;
    margin-left: 4px;
    font-size: 15px;
    font-weight: 700;
  }
`;

const StyledTasks = styled.div`
  flex: 1;
  min-width: 0;
  display: flex;
  gap: 2px;
  padding: 5px 0 3px;
`;

const StyledTask = styled.button`
  width: 158px;
  flex: 0 1 auto;
  display: flex;
  align-items: center;
  gap: 4px;
  padding: 0 8px;
  white-space: nowrap;
  border-radius: 2px;
  font-family: 'DejaVu Sans Condensed', 'DejaVu Sans', sans-serif;
  color: ${({ $active }) => ($active ? '#fff' : '#1b1b22')};
  background: ${({ $active }) =>
    $active ? 'linear-gradient(#5b6673, #727e8a 5px, #76828e)' : 'linear-gradient(#fff, #f0f0f5 8px, #cbcbd9 18px, #b5b5c8)'};
  box-shadow: ${({ $active }) => ($active ? 'inset 1px 1px #4b5561' : 'inset 1px 1px #fff, 1px 1px #84839b')};
`;

const StyledTray = styled.div`
  display: flex;
  align-items: center;
  gap: 3px;
  padding: 2px 17px 0 0;

  & time {
    margin-left: 7px;
  }
`;

const StyledTrayButton = styled.button`
  width: 17px;
  height: 17px;
  display: flex;
  align-items: center;
  justify-content: center;
  border-radius: 50%;
  border: 1px solid #77768f;
  background: radial-gradient(#b5b5c8, #85849f);
`;

/* ---------- data ---------- */

const tree = [
  { label: 'Drones', level: 0, toggle: '+' },
  { label: 'Electronics and Sensor Upgrades', level: 0, toggle: '+' },
  { label: 'Electronic Warfare', level: 0, toggle: '+' },
  { label: 'Engineering Equipment', level: 0, toggle: '+' },
  { label: 'Hull & Armor', level: 0, toggle: '-' },
  { label: 'Armor Hardeners', level: 1, toggle: '+' },
  { label: 'Armor Repair Systems', level: 1, toggle: '+' },
  { label: 'Energized Plating', level: 1, toggle: '-' },
  { label: 'Adaptive', level: 2, selected: true },
  { label: 'Reflective', level: 2 },
  { label: 'Thermic', level: 2 },
  { label: 'Magnetic', level: 2 },
  { label: 'Reactive', level: 2 },
  { label: 'Regenerative', level: 2, end: true },
  { label: 'Hull Upgrades', level: 1, toggle: '+' },
  { label: 'Remote Repair Systems', level: 1, toggle: '+' },
  { label: 'Resistance Plating', level: 1, toggle: '+' },
  { label: 'Armor Plates', level: 1 },
  { label: 'Damage Controls', level: 1 },
];

const items = [
  'Amarr Navy Energized Adaptive Nano Me...',
  'Ammatar Navy Energized Adaptive Nano ...',
  'Dark Blood Energized Adaptive Nano Me...',
  'Gallente Navy Energized Adaptive Nano ...',
  'Khanid Navy Energized Adaptive Nano M...',
  'Shadow Serpentis Energized Adaptive N...',
  'True Sansha Energized Adaptive Nano M...',
];

const blaster = [true, 'blaster', 'Heavy Ion Blaster II', '24.8', '145.4', '-1.2', '1.7+5.7', 'Caldari Navy Anti...'];

const modules = [
  [true, 'repairer', 'Medium Armor Repairer II', '28', '173', '-16.7'],
  [false, 'membrane', 'Energized Adaptive Nano Membrane II', '36', '1'],
  [true, 'hardener', 'Armor Explosive Hardener II', '36', '1', '-1.5'],
  [true, 'damage', 'Damage Control II', '30', '1', '0'],
  [false, 'magstab', 'Magnetic Field Stabilizer II', '30', '1'],
  [false, 'membrane', 'Shadow Serpentis Energized Adaptive Nano...', '30', '1'],
  [true, 'mwd', '10MN MicroWarpdrive II', '50', '165', '-15.8'],
  [true, 'scrambler', 'Fleeting Warp Scrambler I', '36', '1', '-3.4', '20'],
  [true, 'inhibitor', 'Fleeting Propulsion Inhibitor I', '22', '1', '-0.7', '10'],
  blaster,
  blaster,
  blaster,
  blaster,
  blaster,
  [true, 'nos', 'Small Diminishing Power System Drain I', '15', '9', '+3.2', '6.6'],
  [false, 'rig', 'Rig Slot'],
  [false, 'rig', 'Rig Slot'],
];

const meters = [
  { icon: 'cpu', label: '436.75 / 437.5', value: 100 },
  { icon: 'grid', label: '1080.8 / 1237.5', value: 90 },
  { icon: 'drone', label: '50 / 50', value: 100 },
];

const resists = [
  ['em', '12%', '79.1%'],
  ['thermal', '64.8%', '83%'],
  ['kinetic', '86.8%', '91.5%'],
  ['explosive', '64.8%', '76.5%'],
];

const tasks = [
  ['aim', 'AIM'],
  ['eve', 'EVE'],
  ['ie', 'Scrapheap Challenge ...'],
  ['itunes', 'iTunes'],
  ['gun', 'EFT - Eve Fitting Tool'],
];

/* ---------- components ---------- */

const Stat = ({ icon, size = 24, gap, height, children }) => (
  <StyledStat $gap={gap} $height={height}>
    <Icon name={icon} size={size} />
    <span>{children}</span>
  </StyledStat>
);

const CaptionButtons = ({ middle }) => (
  <StyledCaptionButtons>
    <StyledCaptionButton aria-label="Minimize">
      <Icon name="minimize" size={13} />
    </StyledCaptionButton>
    <StyledCaptionButton aria-label={middle} $kind={middle}>
      <Icon name={middle} size={13} />
    </StyledCaptionButton>
    <StyledCaptionButton aria-label="Close" $kind="close">
      <Icon name="cross" size={15} />
    </StyledCaptionButton>
  </StyledCaptionButtons>
);

const Combo = ({ label, value }) => (
  <StyledCombo>
    <select aria-label={label} defaultValue={value}>
      <option>{value}</option>
    </select>
    <span>
      <Icon name="down" size={10} />
    </span>
  </StyledCombo>
);

const TreeItem = ({ label, level, toggle, selected, end }) => (
  <StyledTreeItem>
    {Array.from({ length: level }, (_, i) => (
      <StyledGuide key={i} />
    ))}
    <StyledGuide $branch $end={end}>
      {toggle && <StyledToggle $open={toggle === '-'} aria-label={`Toggle ${label}`} />}
    </StyledGuide>
    <StyledTreeLabel $selected={selected}>{label}</StyledTreeLabel>
  </StyledTreeItem>
);

const Sidebar = () => (
  <StyledSidebar>
    <StyledSearch>
      <input aria-label="Search" placeholder="<Enter text to search>" />
      <StyledSearchButton $white aria-label="Lock">
        <Icon name="lock" size={12} />
      </StyledSearchButton>
      <StyledSearchButton aria-label="Clear">
        <Icon name="cross" size={13} />
      </StyledSearchButton>
    </StyledSearch>
    <StyledTreeBox>
      <StyledTree>
        {tree.map(node => (
          <TreeItem key={node.label} {...node} />
        ))}
      </StyledTree>
      <StyledScrollbar>
        <StyledScrollButton aria-label="Scroll up">
          <Icon name="up" size={10} />
        </StyledScrollButton>
        <StyledScrollThumb />
        <StyledScrollButton aria-label="Scroll down">
          <Icon name="down" size={10} />
        </StyledScrollButton>
      </StyledScrollbar>
    </StyledTreeBox>
    <StyledListBox $open>
      <StyledTable>
        <colgroup>
          <col width="230" />
          <col width="30" />
          <col width="30" />
          <col />
        </colgroup>
        <thead>
          <tr>
            <th>Name</th>
            <th aria-label="CPU">
              <Icon name="cpu" />
            </th>
            <th aria-label="Powergrid">
              <Icon name="grid" />
            </th>
            <th aria-label="Empty" />
          </tr>
        </thead>
        <tbody>
          {items.map((name, i) => (
            <tr key={name}>
              <td>
                <StyledNameCell>
                  <Icon name="membrane" size={13} />
                  <StyledItemName $selected={i === 5}>{name}</StyledItemName>
                </StyledNameCell>
              </td>
              <td>30</td>
              <td>1</td>
              <td />
            </tr>
          ))}
        </tbody>
      </StyledTable>
    </StyledListBox>
    <StyledTabs>
      <StyledTab>Market</StyledTab>
      <StyledTab $active>Faction</StyledTab>
      <StyledTab>Complex</StyledTab>
      <StyledTab>Commander</StyledTab>
    </StyledTabs>
  </StyledSidebar>
);

const ModuleList = () => (
  <StyledListBox>
    <StyledTable>
      <colgroup>
        <col />
        <col width="33" />
        <col width="39" />
        <col width="36" />
        <col width="74" />
        <col width="109" />
        <col width="19" />
      </colgroup>
      <thead>
        <tr>
          <th>Modules</th>
          <th aria-label="CPU">
            <Icon name="cpu" />
          </th>
          <th aria-label="Powergrid">
            <Icon name="grid" />
          </th>
          <th aria-label="Capacitor">
            <Icon name="cap" />
          </th>
          <th>Optimal</th>
          <th>Charges</th>
          <th aria-label="Empty" />
        </tr>
      </thead>
      <tbody>
        {modules.map(([active, icon, name, ...values], i) => (
          <tr key={i}>
            <td>
              <StyledNameCell>
                <StyledCheckSlot>{active && <Icon name="check" size={11} />}</StyledCheckSlot>
                <Icon name={icon} />
                <StyledItemName>{name}</StyledItemName>
              </StyledNameCell>
            </td>
            {[0, 1, 2, 3, 4, 5].map(n => (
              <td key={n}>{values[n]}</td>
            ))}
          </tr>
        ))}
      </tbody>
    </StyledTable>
  </StyledListBox>
);

const ShipResources = () => (
  <StyledGroup>
    <legend>Ship Resources</legend>
    <StyledResources>
      <StyledStack $ruled>
        <Stat icon="turret" size={27}>: 0</Stat>
        <Stat icon="launcher" size={27}>: 0</Stat>
        <Stat icon="calibration" size={27}>: 400</Stat>
      </StyledStack>
      <StyledStack>
        {meters.map(({ icon, label, value }) => (
          <StyledStat key={icon} $gap={6}>
            <Icon name={icon} size={27} />
            <StyledMeter>
              <StyledMeterTrack role="progressbar" aria-label={label} aria-valuenow={value}>
                <div style={{ width: `${value}%` }} />
              </StyledMeterTrack>
              {label}
            </StyledMeter>
          </StyledStat>
        ))}
      </StyledStack>
    </StyledResources>
  </StyledGroup>
);

const ShipParameters = () => (
  <StyledGroup $grow $pad={8}>
    <legend>Ship Parameters</legend>
    <StyledParams>
      <StyledGroup>
        <legend>Hitpoints (Effective HP: 25,187)</legend>
        <StyledStatGrid $columns="76px 77px 1fr">
          <Stat icon="shield" height={29}>: 1160</Stat>
          <Stat icon="armor" height={29}>: 2550</Stat>
          <Stat icon="hull" size={22} height={29}>: 3164</Stat>
        </StyledStatGrid>
        <StyledStatGrid $columns="repeat(4, 56px)">
          {resists.map(([icon, shield, armor]) => (
            <StyledResist key={icon}>
              <Icon name={icon} size={16} />
              <p>
                {shield}
                <br />
                {armor}
              </p>
            </StyledResist>
          ))}
        </StyledStatGrid>
      </StyledGroup>
      <StyledGroupPair>
        <StyledGroup>
          <legend>Defence</legend>
          <Stat icon="repairer" size={23} height={25}>
            <StyledLines>
              : 0
              <br />: 191
            </StyledLines>
          </Stat>
        </StyledGroup>
        <StyledGroup>
          <legend>Capacitor (Lasts: 56s)</legend>
          <StyledStatGrid $columns="79px 1fr">
            <Stat icon="cap" size={22} height={25}>: 1650</Stat>
            <Stat icon="recharge" height={25}>
              <StyledLines>
                - 44
                <br />
                +18.6
              </StyledLines>
            </Stat>
          </StyledStatGrid>
        </StyledGroup>
      </StyledGroupPair>
      <StyledGroupPair>
        <StyledGroup>
          <legend>Firepower</legend>
          <Stat icon="firepower">: 483</Stat>
          <Stat icon="volley">: 1064</Stat>
        </StyledGroup>
        <StyledGroup>
          <legend>Targeting</legend>
          <StyledStatGrid $columns="88px 1fr">
            <Stat icon="range" size={22}>: 81.25 km</Stat>
            <Stat icon="targets" size={22}>: 5</Stat>
            <Stat icon="scan" size={22}>: 281.3 mm</Stat>
            <Stat icon="sensor" size={22}>: 15</Stat>
          </StyledStatGrid>
        </StyledGroup>
      </StyledGroupPair>
      <StyledGroup>
        <legend>Mobility</legend>
        <StyledStatGrid $columns="80px 66px 1fr">
          <Stat icon="mwd" size={20} height={25}>: 1768 m/s</Stat>
          <Stat icon="align" gap={2} height={25}>: 10 s</Stat>
          <Stat icon="warp" size={22} gap={0} height={25}>: 3.8 au/s</Stat>
        </StyledStatGrid>
      </StyledGroup>
      <StyledInfo>
        <span>Signature: 1040 m2</span>
        <span>Cargohold: 315 m3</span>
        <span>Dronebay: 50 / 50 m3</span>
      </StyledInfo>
    </StyledParams>
  </StyledGroup>
);

const FittingWindow = () => (
  <StyledWindow>
    <StyledWindowTitle>
      <Icon name="ship" size={16} />
      <StyledTitle as="h2">Setups for Deimos Heavy Assault Ship</StyledTitle>
      <CaptionButtons middle="maximize" />
    </StyledWindowTitle>
    <StyledWindowBody>
      <StyledLeftColumn>
        <StyledSetupRow>
          <StyledGroup>
            <legend>Current Setup</legend>
            <StyledSetupControls>
              <Combo label="Current Setup" value="PVP" />
              <StyledSetupButton aria-label="Setup actions">
                <Icon name="gun" size={17} />
              </StyledSetupButton>
            </StyledSetupControls>
          </StyledGroup>
          <StyledGroup>
            <legend>Character</legend>
            <StyledSetupControls>
              <Combo label="Character" value="Mae west" />
              <StyledSkillBar />
            </StyledSetupControls>
          </StyledGroup>
        </StyledSetupRow>
        <ModuleList />
        <StyledStatus>
          <span>Active drones: 5 / 5</span>
          <span>Gang bonuses</span>
          <span>Projected effects</span>
        </StyledStatus>
      </StyledLeftColumn>
      <StyledRightColumn>
        <ShipResources />
        <ShipParameters />
      </StyledRightColumn>
    </StyledWindowBody>
  </StyledWindow>
);

const Taskbar = () => (
  <StyledTaskbar>
    <StyledStart>
      <Icon name="windows" size={18} />
      start
    </StyledStart>
    <StyledQuickLaunch>
      <button aria-label="AIM">
        <Icon name="aim" size={17} />
      </button>
      <button aria-label="Internet Explorer">
        <Icon name="ie" size={16} />
      </button>
      <button aria-label="Show Desktop">
        <Icon name="desktop" size={16} />
      </button>
      <button>»</button>
    </StyledQuickLaunch>
    <StyledTasks>
      {tasks.map(([icon, label]) => (
        <StyledTask key={label} $active={icon === 'gun'}>
          <Icon name={icon} size={16} />
          {label}
        </StyledTask>
      ))}
    </StyledTasks>
    <StyledTray>
      <StyledTrayButton aria-label="Show hidden icons">
        <Icon name="left" size={12} />
      </StyledTrayButton>
      <Icon name="steam" size={16} />
      <time>5:31 PM</time>
    </StyledTray>
  </StyledTaskbar>
);

const App = () => (
  <>
    <GlobalStyle />
    <IconDefs />
    <StyledPage>
      <StyledTitleBar>
        <Icon name="gun" size={16} />
        <StyledTitle>EFT - Eve Fitting Tool</StyledTitle>
        <CaptionButtons middle="restore" />
      </StyledTitleBar>
      <StyledMenu>
        <button>File</button>
        <button>View</button>
        <button>Window</button>
        <button>Help</button>
      </StyledMenu>
      <StyledMain>
        <Sidebar />
        <StyledDesktop>
          <FittingWindow />
        </StyledDesktop>
      </StyledMain>
      <Taskbar />
    </StyledPage>
  </>
);

export default App;
